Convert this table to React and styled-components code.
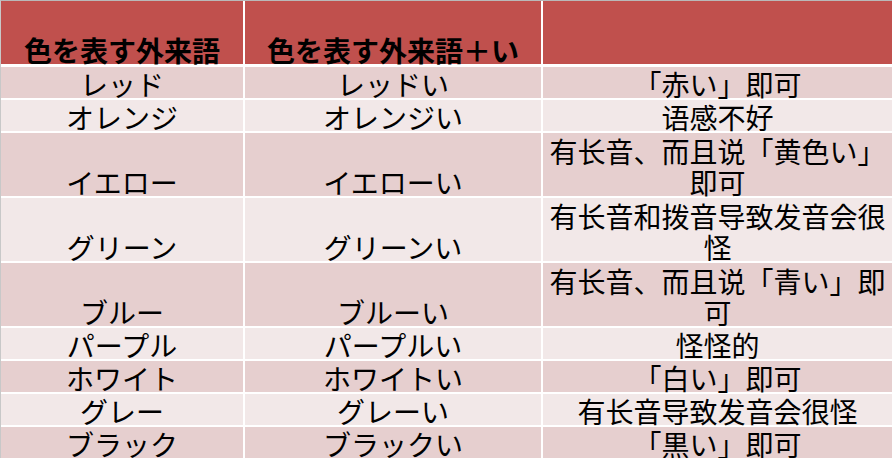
import React from "react";
import styled, { createGlobalStyle } from "styled-components";

const rows = [
    { a: "レッド", b: "レッドい", c: "「赤い」即可" },
    { a: "オレンジ", b: "オレンジい", c: "语感不好" },
    { a: "イエロー", b: "イエローい", c: "有长音、而且说「黄色い」即可", tall: true },
    { a: "グリーン", b: "グリーンい", c: "有长音和拨音导致发音会很怪", tall: true },
    { a: "ブルー", b: "ブルーい", c: "有长音、而且说「青い」即可", tall: true },
    { a: "パープル", b: "パープルい", c: "怪怪的" },
    { a: "ホワイト", b: "ホワイトい", c: "「白い」即可" },
    { a: "グレー", b: "グレーい", c: "有长音导致发音会很怪" },
    { a: "ブラック", b: "ブラックい", c: "「黒い」即可" },
];

const GlobalStyle = createGlobalStyle`
    body {
        margin: 0;
        background: #ffffff;
        font-family: "Noto Sans CJK JP", "Noto Sans CJK SC", sans-serif;
        color: #000000;
    }
`;

const App = () => {
    return (
        <>
            <GlobalStyle />
            <Frame>
                <HeadRow>
                    <HeadCell>
                        <Text>色を表す外来語</Text>
                    </HeadCell>
                    <HeadCell>
                        <Text>色を表す外来語＋い</Text>
                    </HeadCell>
                    <HeadCell />
                </HeadRow>
                <Body>
                    {rows.map((row, key) => (
                        <Row key={key} tall={row.tall}>
                            <Cell dark={key % 2 === 0}>
                                <Text>{row.a}</Text>
                            </Cell>
                            <Cell dark={key % 2 === 0}>
                                <Text>{row.b}</Text>
                            </Cell>
                            <Cell dark={key % 2 === 0} wide>
                                <Text wrap>{row.c}</Text>
                            </Cell>
                        </Row>
                    ))}
                </Body>
            </Frame>
        </>
    );
};

const Frame = styled.div`
    border-top: 1px solid #b9b9b9;
    border-left: 1px solid #c8c8c8;
    width: 891px;
`;

const Body = styled.div`
    display: flex;
    flex-direction: column;
    gap: 2px;
`;

const HeadRow = styled.div`
    display: grid;
    grid-template-columns: 242px 296px 349px;
    column-gap: 2px;
    height: 63px;
    margin-bottom: 3px;
`;

const Row = styled.div`
    display: grid;
    grid-template-columns: 242px 296px 349px;
    column-gap: 2px;
    height: ${(props) => (props.tall ? "63px" : "31px")};
`;

const HeadCell = styled.div`
    background: #c0504d;
    display: flex;
    align-items: flex-end;
    justify-content: center;
    font-size: 28px;
    font-weight: 700;
    line-height: 31px;
    white-space: nowrap;
`;

const Cell = styled.div`
    background: ${(props) => (props.dark ? "#e6cfcf" : "#f2e8e8")};
    display: flex;
    align-items: flex-end;
    justify-content: center;
    text-align: center;
    font-size: 28px;
    line-height: 31px;
    padding: 0 ${(props) => (props.wide ? "5px" : "0")};
`;

const Text = styled.span`
    display: block;
    margin-bottom: -2px;
    white-space: ${(props) => (props.wrap ? "normal" : "nowrap")};
    line-break: strict;
`;

export default App;
